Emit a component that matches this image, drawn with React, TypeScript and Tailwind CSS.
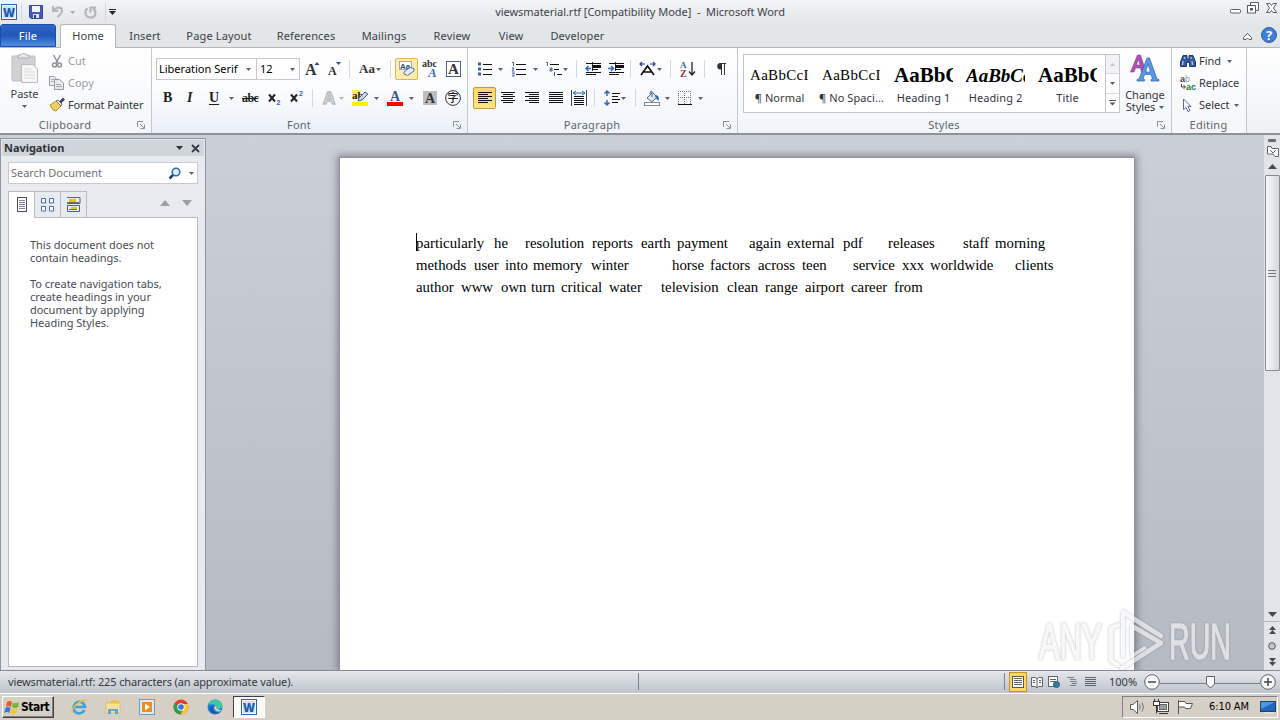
import React from 'react';
import clsx from 'clsx';

interface IconProps {
    w: number;
    h?: number;
    className?: string;
    children: React.ReactNode;
}

const Icon = ({ w, h = 16, className, children }: IconProps) => (
    <svg width={w} height={h} viewBox={`0 0 ${w} ${h}`} fill="none" className={clsx('shrink-0 overflow-visible', className)}>
        {children}
    </svg>
);

const Caret = ({ className, color = '#5c6066' }: { className?: string; color?: string }) => (
    <Icon w={5} h={3} className={className}>
        <path d="M0 0H5L2.5 3Z" fill={color} />
    </Icon>
);

const Sep = ({ className }: { className?: string }) => <div className={clsx('h-[18px] w-px shrink-0 bg-[#d5d9de]', className)} />;

const Launcher = () => (
    <Icon w={8} h={8}>
        <path d="M.5 6V.5H6M3 3L7 7M7.500 3.500V7.500H3.500" stroke="#8b919a" />
    </Icon>
);

interface GroupProps {
    label: string;
    className: string;
    launcher?: boolean;
    children: React.ReactNode;
}

const Group = ({ label, className, launcher = true, children }: GroupProps) => (
    <div className={clsx('flex h-full shrink-0 flex-col border-r border-[#c3c8ce]', className)}>
        <div className="h-[69px] shrink-0">{children}</div>
        <div className={clsx('flex h-[16px] items-center text-[#5f656d]', launcher ? 'pr-[6px]' : 'pr-[1px]')}>
            <span className={clsx('flex-1 text-center tracking-[0.25px]', launcher && 'pr-[7px]')}>{label}</span>
            {launcher && <Launcher />}
        </div>
    </div>
);

const Lines = ({ rows }: { rows: number[][] }) => (
    <>
        {rows.map(([x, y, len]) => (
            <path key={y} d={`M${x} ${y}.5h${len}`} stroke="#111" />
        ))}
    </>
);

const WordLogo = ({ className }: { className?: string }) => (
    <Icon w={16} className={className}>
        <rect x=".5" y=".5" width="15" height="15" fill="#f4f9fe" stroke="#2b66b0" />
        <rect x="2" y="2" width="12" height="12" fill="#cfe2f5" />
        <text x="8" y="12.500" textAnchor="middle" fontSize="12" fontWeight="800" fontFamily="Open Sans" fill="#1c5bac" textLength="12" lengthAdjust="spacingAndGlyphs">W</text>
    </Icon>
);

const tabs = [
    { name: 'Insert', cls: 'w-[58px]' },
    { name: 'Page Layout', cls: 'w-[90px]' },
    { name: 'References', cls: 'w-[84px]' },
    { name: 'Mailings', cls: 'w-[72px]' },
    { name: 'Review', cls: 'w-[64px]' },
    { name: 'View', cls: 'w-[54px]' },
    { name: 'Developer', cls: 'w-[79px]' },
];

const TitleBar = () => (
    <div className="flex h-6 shrink-0 items-center bg-gradient-to-b from-[#f2f4f6] to-[#e3e7ea]">
        <WordLogo className="ml-[1px]" />
        <Sep className="ml-[4px] h-[13px] bg-[#a9aeb5]" />
        <Icon w={14} h={14} className="ml-[7px]">
            <path d="M.5.5H13.500V13.500H2L.5 12Z" fill="#4956bd" stroke="#3a449c" />
            <path d="M3 1H11V7H3Z" fill="#f4f6ff" />
            <path d="M4 9H10V13H4Z" fill="#dfe3f3" />
            <path d="M5 10H7V13H5Z" fill="#303a8c" />
        </Icon>
        <Icon w={14} h={14} className="ml-[8px]">
            <path d="M2 1V6H7.500M3 5.500C5 2 10.500 1.500 11 5C11.500 8 9 10 6.500 12" stroke="#b3b6ba" strokeWidth="2.200" />
        </Icon>
        <Caret className="ml-[5px]" color="#a4a8ad" />
        <Icon w={13} h={13} className="ml-[9px]">
            <path d="M3.500 2.500C0 5 1 11.500 6.500 11.500S13 5 9 2.500M6.500 6.500V1.500H12" stroke="#b3b6ba" strokeWidth="2.200" />
        </Icon>
        <Sep className="ml-[8px] h-[13px] bg-[#8e949b]" />
        <Icon w={7} h={6} className="ml-[3px]">
            <path d="M0 .5H7" stroke="#222" />
            <path d="M0 2H7L3.500 6Z" fill="#222" />
        </Icon>
        <div className="flex-1 pr-[66px] text-center tracking-[-0.04px] text-[#3d4147]">viewsmaterial.rtf [Compatibility Mode]&nbsp; -&nbsp; Microsoft Word</div>
        <Icon w={48} h={13} className="mr-[2px] mb-[7px]">
            <rect x=".5" y="7.500" width="10" height="3.500" rx="1" fill="#fff" stroke="#5a5e64" />
            <path d="M20.500 3.500V.5H28.500V8.500H25" fill="#fff" stroke="#5a5e64" />
            <rect x="17.500" y="3.500" width="8" height="7.500" fill="#fff" stroke="#5a5e64" />
            <rect x="20.500" y="6.500" width="2" height="1.500" stroke="#5a5e64" />
            <path d="M36.500 1.500H40L41.500 3.500L43 1.500H46.500L43.500 6L46.500 10.500H43L41.500 8.500L40 10.500H36.500L39.500 6Z" fill="#fff" stroke="#5a5e64" />
        </Icon>
    </div>
);

const TabBar = () => (
    <div className="flex h-6 shrink-0 items-end border-b border-[#b3b8be] bg-[#e2e6e9] text-[#3c4046]">
        <div className="flex h-[23px] w-[56px] items-center justify-center rounded-t-[3px] border border-[#1e4fa8] bg-gradient-to-b from-[#2f66c6] via-[#2257b8] to-[#4f8de0] tracking-[0.2px] text-white">File</div>
        <div className="ml-[4px] -mb-px flex h-[24px] w-[56px] items-center justify-center rounded-t-[3px] border border-b-0 border-[#b3b8be] bg-white pb-[2px] tracking-[0.1px]">Home</div>
        <div className="flex h-[23px] flex-1 items-center tracking-[0.15px]">
            {tabs.map((tab) => (
                <div key={tab.name} className={clsx('shrink-0 text-center', tab.cls)}>{tab.name}</div>
            ))}
        </div>
        <Icon w={11} h={9} className="mb-[6px]">
            <path d="M1.500 5.500L5.500 1.500L9.500 5.500V7.500H7L5.500 6L4 7.500H1.500Z" fill="#fff" stroke="#5a5e64" />
        </Icon>
        <Icon w={16} className="mr-[3px] mb-[4px] ml-[8px]">
            <circle cx="8" cy="8" r="7.500" fill="#3f7fd6" stroke="#2d5ea8" />
            <text x="8" y="12.500" textAnchor="middle" fontSize="13" fontWeight="700" fontFamily="Open Sans" fill="#fff">?</text>
        </Icon>
    </div>
);

const Clipboard = () => (
    <Group label="Clipboard" className="w-[152px] bg-gradient-to-b from-white to-[#f4f6f9]">
        <div className="flex h-full">
            <div className="flex w-[49px] flex-col items-center pt-[5px] text-[#3c4046]">
                <Icon w={28} h={31}>
                    <rect x="1" y="3" width="23" height="25" rx="1" fill="#d0d1d3" stroke="#bbbdc0" />
                    <path d="M7 5V2H10C10 0 15 0 15 2H18V5Z" fill="#e8e8e8" stroke="#a9abae" />
                    <path d="M10.500 11.500H22L26.500 16V29.500H10.500Z" fill="#f6f6f7" stroke="#b9bbbe" />
                    <path d="M13 16H20M13 19H24M13 22H24M13 25H24" stroke="#d9dadc" />
                </Icon>
                <span className="mt-[2px] leading-[15px] tracking-[-0.1px]">Paste</span>
                <Caret className="mt-[4px]" />
            </div>
            <div className="flex flex-col pt-[2px] text-[#9a9da1]">
                <div className="flex h-[22px] items-center">
                    <Icon w={16} className="mr-[3px]">
                        <path d="M4.500 2L9 10M11.500 2L7 10" stroke="#8e9296" strokeWidth="1.500" />
                        <circle cx="5.500" cy="12" r="2" stroke="#8e9296" strokeWidth="1.500" />
                        <circle cx="10.500" cy="12" r="2" stroke="#8e9296" strokeWidth="1.500" />
                    </Icon>
                    Cut
                </div>
                <div className="flex h-[22px] items-center">
                    <Icon w={16} className="mr-[3px]">
                        <path d="M.5 1.500H5L7.500 4V10.500H.5Z" fill="#f0f0f1" stroke="#96999d" />
                        <path d="M5.500 4.500H10.500L14.500 8V14.500H5.500Z" fill="#e9eaeb" stroke="#96999d" />
                        <path d="M2 4.500H5M2 6.500H5M7 9.500H12M7 11.500H13" stroke="#a8aaad" />
                    </Icon>
                    Copy
                </div>
                <div className="flex h-[22px] items-center tracking-[-0.15px] text-[#33373c]">
                    <Icon w={16} className="mr-[3px]">
                        <path d="M1 8L7 4L12 9L7 14L4 13Z" fill="#f1cf62" stroke="#b98f2e" />
                        <path d="M7 4L9 3L13 7L12 9Z" fill="#f7f0cf" stroke="#77736a" />
                        <path d="M10.500 4.500L14 1L15.500 2.500L12 6Z" fill="#49408e" stroke="#49408e" />
                    </Icon>
                    Format Painter
                </div>
            </div>
        </div>
    </Group>
);

const FontGroup = () => (
    <Group label="Font" className="w-[316px] bg-gradient-to-b from-white via-[#fbfcfe] to-[#eaf0f8]">
        <div className="mt-[10px] flex h-[22px] items-center pl-[4px]">
            <div className="flex h-[22px] w-[101px] items-center justify-between border border-[#c5c9cf] bg-white pr-[5px] pl-[2px] text-black">
                Liberation Serif <Caret />
            </div>
            <div className="flex h-[22px] w-[43px] items-center justify-between border border-l-0 border-[#c5c9cf] bg-white pr-[4px] pl-[3px] text-black">
                12 <Caret />
            </div>
            <Icon w={15} className="ml-[5px]">
                <text x="0" y="14" fontSize="16" fontWeight="700" fontFamily="Liberation Serif" fill="#333">A</text>
                <path d="M9.500 4L12 1L14.500 4Z" fill="#2f4a85" />
            </Icon>
            <Icon w={13} className="ml-[8px]">
                <text x="0" y="14" fontSize="12" fontWeight="700" fontFamily="Liberation Serif" fill="#333">A</text>
                <path d="M8 1H13L10.500 4Z" fill="#2f4a85" />
            </Icon>
            <Sep className="ml-[8px]" />
            <span className="ml-[9px] w-[16px] font-['Liberation_Serif'] text-[13px] font-bold text-[#333]">Aa</span>
            <Caret className="ml-[1px]" />
            <Sep className="ml-[9px]" />
            <div className="ml-[4px] flex h-[22px] w-[23px] shrink-0 items-center justify-center rounded-[2px] border border-[#e0b44c] bg-[#fdeeb0]">
                <Icon w={17}>
                    <rect x="1.500" y=".5" width="12" height="8" fill="#fff" stroke="#9ba9c4" />
                    <text x="2" y="7.500" fontSize="8" fontWeight="700" fontFamily="Liberation Sans" fill="#34527f">Aa</text>
                    <path d="M6 11L12 6.500L16 7.500V10L9.500 14.500L6 13Z" fill="#e8eef9" stroke="#5571a8" />
                </Icon>
            </div>
            <Icon w={16} h={18} className="ml-[4px]">
                <text x="0" y="7" fontSize="10" fontWeight="700" fontFamily="Liberation Serif" fill="#333" textLength="15">abc</text>
                <text x="6" y="17" fontSize="13" fontWeight="700" fontStyle="italic" fontFamily="Liberation Serif" fill="#3c69b8">A</text>
            </Icon>
            <Icon w={16} className="ml-[8px]">
                <rect x=".5" y=".5" width="14" height="15" fill="#fff" stroke="#4f6285" />
                <text x="7.500" y="13" textAnchor="middle" fontSize="15" fontWeight="700" fontFamily="Liberation Serif" fill="#333">A</text>
            </Icon>
        </div>
        <div className="mt-[8px] flex h-[20px] items-center pl-[4px] font-['Liberation_Serif'] text-[14px] font-bold text-[#1d1d1d]">
            <span className="ml-[7px] w-[10px]">B</span>
            <span className="ml-[14px] w-[9px] font-bold italic">I</span>
            <span className="ml-[13px] w-[11px] underline underline-offset-2">U</span>
            <Caret className="ml-[9px]" />
            <span className="ml-[8px] w-[17px] text-[12px] tracking-[-0.6px] line-through">abc</span>
            <Icon w={13} className="ml-[9px]">
                <path d="M1 4.500L7 11.500M7 4.500L1 11.500" stroke="#222" strokeWidth="2" />
                <text x="8.500" y="14.500" fontSize="7" fontWeight="700" fontFamily="Liberation Sans" fill="#3465ac">2</text>
            </Icon>
            <Icon w={14} className="ml-[9px]">
                <path d="M1 4.500L7 11.500M7 4.500L1 11.500" stroke="#222" strokeWidth="2" />
                <text x="9" y="6" fontSize="7" fontWeight="700" fontFamily="Liberation Sans" fill="#3465ac">2</text>
            </Icon>
            <Sep className="ml-[8px]" />
            <Icon w={15} className="ml-[9px]">
                <text x="1" y="14" fontSize="17" fontWeight="700" fontFamily="Liberation Sans" fill="#f6f6f6" stroke="#b9bbbf" strokeWidth="1.500">A</text>
            </Icon>
            <Caret className="ml-[2px]" color="#b5b8bc" />
            <Icon w={17} className="ml-[8px]">
                <rect x="0" y="0" width="9" height="9" fill="#ffee62" />
                <text x="0" y="8.500" fontSize="11" fontWeight="700" fontFamily="Liberation Serif" fill="#222">ab</text>
                <path d="M7 8L13 2L16 4L10 10L6 11Z" fill="#c7d4ea" stroke="#4b648f" />
                <rect y="12" width="16" height="4" fill="#fff200" />
            </Icon>
            <Caret className="ml-[5px]" />
            <Icon w={16} className="ml-[8px]">
                <text x="8" y="10.500" textAnchor="middle" fontSize="14" fontWeight="700" fontFamily="Liberation Serif" fill="#34558f">A</text>
                <rect y="12" width="16" height="4" fill="#f00" />
            </Icon>
            <Caret className="ml-[6px]" />
            <Icon w={14} className="ml-[9px]">
                <rect y="1" width="14" height="14" fill="#bdbdbd" />
                <text x="7" y="13" textAnchor="middle" fontSize="14" fontWeight="700" fontFamily="Liberation Serif" fill="#333">A</text>
            </Icon>
            <Icon w={16} className="ml-[8px]">
                <circle cx="8" cy="8" r="7.400" stroke="#333" />
                <text x="8" y="12" textAnchor="middle" fontSize="11" fontFamily="Noto Sans CJK SC" fontWeight="500" fill="#222">字</text>
            </Icon>
        </div>
    </Group>
);

const alignCenter = [[0, 1, 14], [2, 3, 10], [0, 5, 14], [2, 7, 10], [0, 9, 14], [2, 11, 10]];
const alignRight = [[0, 1, 14], [4, 3, 10], [0, 5, 14], [4, 7, 10], [0, 9, 14], [4, 11, 10]];
const alignLeft = [[0, 1, 14], [0, 3, 10], [0, 5, 14], [0, 7, 10], [0, 9, 14], [0, 11, 10]];
const alignFull = [[0, 1, 14], [0, 3, 14], [0, 5, 14], [0, 7, 14], [0, 9, 14], [0, 11, 14]];

const IndentLines = () => (
    <>
        <Lines rows={[[1, 1, 15], [7, 4, 9], [7, 7, 6], [1, 10, 15], [1, 12, 10]]} />
        <path d="M7 3.500H16M7 5.500H16" stroke="#111" />
        <path d="M7.500 0V14" stroke="#333" strokeDasharray="1 1" />
    </>
);

const Paragraph = () => (
    <Group label="Paragraph" className="w-[270px] bg-gradient-to-b from-white to-[#f1f5fa]">
        <div className="mt-[10px] flex h-[22px] items-center">
            <Icon w={14} h={14} className="ml-[10px]">
                <path d="M0 2H3M0 7H3M0 12H3" stroke="#3c62a5" strokeWidth="3" />
                <path d="M5 2.500H14M5 7.500H14M5 12.500H14" stroke="#111" />
            </Icon>
            <Caret className="ml-[6px]" />
            <Icon w={15} h={15} className="ml-[8px]">
                <path d="M1 .5H2.500V4M1 6H3L1 9H3.500M1 11H3.500L2 12.500L3.500 14H1" stroke="#3c62a5" />
                <path d="M5 2.500H15M5 7.500H15M5 12.500H15" stroke="#111" />
            </Icon>
            <Caret className="ml-[7px]" />
            <Icon w={17} className="ml-[7px]">
                <path d="M1 1.500H2.500V5M4.500 7H7V10H5V8.500H7M9.500 11V15" stroke="#3c62a5" />
                <path d="M5 3.500H14M9 8.500H14M12 13.500H17" stroke="#111" />
            </Icon>
            <Caret className="ml-[1px]" />
            <Sep className="ml-[8px]" />
            <Icon w={16} h={14} className="ml-[8px]">
                <IndentLines />
                <path d="M6 6.500H1M3.500 4L1 6.500L3.500 9" stroke="#3267c0" strokeWidth="1.500" />
            </Icon>
            <Icon w={16} h={14} className="ml-[7px]">
                <IndentLines />
                <path d="M0 6.500H5M3 4L5.500 6.500L3 9" stroke="#3267c0" strokeWidth="1.500" />
            </Icon>
            <Sep className="ml-[6px]" />
            <Icon w={17} className="ml-[8px]">
                <path d="M2 14L8.500 5L15 14M4.500 11H12.500" stroke="#111" strokeWidth="1.700" />
                <path d="M1 3H6M3 1L1 3L3 5M11 3H16M14 1L16 3L14 5" stroke="#293d94" strokeWidth="1.200" />
            </Icon>
            <Caret className="ml-[1px]" />
            <Sep className="ml-[8px]" />
            <Icon w={16} className="ml-[9px]">
                <text x="0" y="7" fontSize="9" fontWeight="700" fontFamily="Liberation Serif" fill="#3465ac">A</text>
                <text x="0" y="15.500" fontSize="10" fontWeight="700" fontFamily="Liberation Serif" fill="#9d3434">Z</text>
                <path d="M12 1V13M9 10.500L12 14L15 10.500" stroke="#222" strokeWidth="1.300" />
            </Icon>
            <Sep className="ml-[8px]" />
            <Icon w={11} h={14} className="ml-[11px]">
                <path d="M10 1.500H4.500M5.500 1V13M8.500 1V13" stroke="#333" />
                <path d="M5.500 1H4.500A3 3 0 0 0 4.500 7.500H5.500Z" fill="#333" />
            </Icon>
        </div>
        <div className="mt-[7px] flex h-[22px] items-center">
            <div className="ml-[5px] flex h-[22px] w-[23px] items-center justify-center rounded-[2px] border border-[#c9973b] bg-gradient-to-b from-[#fbd574] to-[#ffe47e]">
                <Icon w={14} h={14}><Lines rows={alignLeft} /></Icon>
            </div>
            <Icon w={14} h={14} className="ml-[5px]"><Lines rows={alignCenter} /></Icon>
            <Icon w={14} h={14} className="ml-[10px]"><Lines rows={alignRight} /></Icon>
            <Icon w={14} h={14} className="ml-[10px]"><Lines rows={alignFull} /></Icon>
            <Icon w={16} className="ml-[8px]">
                <path d="M.5 0V16M15.500 0V16" stroke="#444" />
                <path d="M2 3H14M5 1L2 3L5 5M11 1L14 3L11 5" stroke="#3465ac" />
                <path d="M3 6.500H13M3 8.500H13M3 10.500H13M3 12.500H13M3 14.500H13" stroke="#111" />
            </Icon>
            <Sep className="ml-[7px]" />
            <Icon w={16} className="ml-[9px]">
                <path d="M3 1V6M.5 3.500L3 1L5.500 3.500M3 10V15M.5 12.500L3 15L5.500 12.500" stroke="#3465ac" strokeWidth="1.500" />
                <path d="M8 3.500H16M8 6.500H14M8 9.500H16M8 12.500H14" stroke="#111" />
            </Icon>
            <Caret className="ml-[1px]" />
            <Sep className="ml-[9px]" />
            <Icon w={17} className="ml-[8px]">
                <path d="M3 8L8.500 2.500L13 7L8 12Z" fill="#dfe7f2" stroke="#51698f" />
                <path d="M8 7V1.500Q6 0 6 4" stroke="#51698f" />
                <path d="M12 5Q16 6 14.500 11Q12 9 11 6Z" fill="#3c69b8" />
                <rect x=".5" y="12.500" width="15" height="3" fill="#fff" stroke="#888" />
            </Icon>
            <Caret className="ml-[4px]" />
            <Icon w={14} h={14} className="ml-[8px]">
                <path d="M.5 0V13M6.500 0V13M12.500 0V13M0 .5H13M0 6.500H13" stroke="#777" strokeDasharray="1 1" />
                <path d="M0 13.500H14" stroke="#111" />
            </Icon>
            <Caret className="ml-[6px]" />
        </div>
    </Group>
);

const styleCards = [
    { sample: 'AaBbCcI', name: '¶ Normal', cls: 'text-[15px] tracking-[0.3px]' },
    { sample: 'AaBbCcI', name: '¶ No Spaci...', cls: 'text-[15px] tracking-[0.3px]' },
    { sample: 'AaBbC', name: 'Heading 1', cls: 'text-[21px] font-bold' },
    { sample: 'AaBbCc', name: 'Heading 2', cls: 'text-[19px] font-bold italic' },
    { sample: 'AaBbC', name: 'Title', cls: 'text-[21px] font-bold' },
];

const Styles = () => (
    <Group label="Styles" className="w-[434px] bg-gradient-to-b from-white to-[#f1f5fa]">
        <div className="flex pt-[6px] pl-[5px]">
            <div className="flex h-[59px] w-[377px] border border-[#c1c6cc] bg-white">
                {styleCards.map((card) => (
                    <div key={card.name} className="flex w-[72px] shrink-0 flex-col items-center pt-[9px] pr-px text-[#33373c]">
                        <div className={clsx("h-[23px] w-[59px] overflow-hidden font-['Liberation_Serif'] leading-[23px] whitespace-nowrap text-black", card.cls)}>{card.sample}</div>
                        <span className="mt-[3px] leading-[16px] tracking-[0.1px] whitespace-nowrap">{card.name}</span>
                    </div>
                ))}
                <div className="ml-[1px] flex flex-1 flex-col border-l border-[#c1c6cc]">
                    <div className="flex flex-1 items-center justify-center border-b border-[#d5d9de] bg-[#f1f2f4]">
                        <Icon w={5} h={3}><path d="M0 3H5L2.500 0Z" fill="#c0c3c7" /></Icon>
                    </div>
                    <div className="flex flex-1 items-center justify-center border-b border-[#d5d9de]"><Caret /></div>
                    <div className="flex flex-1 items-center justify-center">
                        <Icon w={7} h={6}>
                            <path d="M0 .5H7" stroke="#555" />
                            <path d="M.5 2.500H6.500L3.500 5.500Z" fill="#555" />
                        </Icon>
                    </div>
                </div>
            </div>
            <div className="flex w-[50px] flex-col items-center leading-[12px] text-[#33373c]">
                <Icon w={30} h={28}>
                    <path d="M.5 18L7.500 1H10.500L16 18H11.500L10.500 14H5.500L4 18ZM6.500 11H10L8.500 5Z" fill="#b14fb0" fillRule="evenodd" stroke="#8b3b95" strokeWidth=".6" />
                    <path d="M7 27V25.500L9 25L17 4H19.500L27 25L29 25.500V27H21V25.500L22.500 25L21 20.500H14.500L13 25L14.500 25.500V27ZM15.500 18H20.500L18 10Z" fill="#5a97e0" fillRule="evenodd" stroke="#2c65b2" strokeWidth=".7" />
                </Icon>
                <span className="mt-[7px]">Change</span>
                <span className="flex items-center gap-[4px] tracking-[-0.1px]">Styles <Caret /></span>
            </div>
        </div>
    </Group>
);

const Editing = () => (
    <Group label="Editing" launcher={false} className="w-[75px] bg-gradient-to-b from-white to-[#f4f6f9]">
        <div className="flex flex-col pt-[2px] pl-[8px] text-[#33373c]">
            <div className="flex h-[22px] items-center">
                <Icon w={16} className="mr-[3px]">
                    <path d="M3 2.500H7V6H9V2.500H13L15.500 9V13.500H9.500V9.500H6.500V13.500H.5V9Z" fill="#3658a0" stroke="#22386f" />
                    <path d="M3 8L2.500 12M12 8L12.500 12M4.500 4V6M11 4V6" stroke="#b4c8ee" strokeWidth="1.300" />
                </Icon>
                Find <Caret className="ml-[6px]" />
            </div>
            <div className="flex h-[22px] items-center">
                <Icon w={16} className="mr-[3px]">
                    <text x="0" y="7" fontSize="9" fontWeight="700" fontFamily="Liberation Sans" fill="#444">a</text>
                    <text x="5" y="7" fontSize="9" fontFamily="Liberation Sans" fill="#999">b</text>
                    <path d="M1.500 9V12H5M3.500 10L5.500 12L3.500 14" stroke="#445" />
                    <text x="6" y="15" fontSize="9" fontWeight="700" fontFamily="Liberation Sans" fill="#267d35">ac</text>
                </Icon>
                Replace
            </div>
            <div className="flex h-[22px] items-center">
                <Icon w={16} className="mr-[3px]">
                    <path d="M3.500 2V12.500L6 10.500L8 14.500L10 13.500L8 9.500H11Z" fill="#fff" stroke="#526a91" />
                </Icon>
                Select <Caret className="ml-[4px]" />
            </div>
        </div>
    </Group>
);

const Navigation = () => (
    <div className="mt-[3px] flex w-[206px] shrink-0 flex-col border border-b-0 border-[#8f959e] bg-[#e7eaef]">
        <div className="m-px mb-0 flex h-[16px] items-center bg-[#d0d4db] px-[2px] font-bold tracking-[-0.05px] text-[#2d3238]">
            <span className="flex-1">Navigation</span>
            <Icon w={7} h={4}><path d="M0 0H7L3.500 4Z" fill="#333" /></Icon>
            <Icon w={9} h={9} className="mr-[2px] ml-[8px]"><path d="M1 1L8 8M8 1L1 8" stroke="#333a44" strokeWidth="1.800" /></Icon>
        </div>
        <div className="mx-[7px] mt-[6px] flex h-[22px] items-center border border-[#c6cad1] bg-white pl-[2px] text-[#6f7379]">
            <span className="flex-1 tracking-[-0.05px]">Search Document</span>
            <Icon w={13} h={13}>
                <circle cx="8" cy="5" r="3.800" fill="#e6f0fb" stroke="#2e6bb8" strokeWidth="1.600" />
                <path d="M5 8L1.500 11.500" stroke="#1d3f77" strokeWidth="2.500" />
            </Icon>
            <Caret className="mr-[3px] ml-[8px]" />
        </div>
        <div className="mx-[7px] mt-[7px] flex h-[26px] shrink-0">
            <div className="z-10 -mb-px flex w-[27px] items-center justify-center border border-b-0 border-[#b7bcc4] bg-white pb-[1px]">
                <Icon w={10} h={15}>
                    <rect x=".5" y=".5" width="9" height="14" fill="#fff" stroke="#4a4f57" />
                    <path d="M2 3.500H8M2 5.500H8M2 7.500H8M2 9.500H8M2 11.500H8" stroke="#7a8595" />
                </Icon>
            </div>
            <div className="flex w-[26px] items-center justify-center border border-b-0 border-l-0 border-[#b7bcc4]">
                <Icon w={13} h={15}>
                    <path d="M.5 1.500H4.500V6H.5ZM8.500 1.500H12.500V6H8.500ZM.5 9.500H4.500V14H.5ZM8.500 9.500H12.500V14H8.500Z" fill="#fff" stroke="#4a6f9e" />
                </Icon>
            </div>
            <div className="flex w-[26px] items-center justify-center border border-b-0 border-l-0 border-[#b7bcc4]">
                <Icon w={13} h={15}>
                    <path d="M0 .5H13V6.500H0M.5 8.500H12.500V14.500H.5Z" stroke="#555d70" fill="#eceef4" />
                    <path d="M2 3.500H9M4 11.500H10" stroke="#e0c800" strokeWidth="3" />
                    <path d="M0 5.500H12M2 12.500H10" stroke="#6a6f80" />
                </Icon>
            </div>
            <div className="flex flex-1 items-center justify-end gap-[12px] pr-[6px] pb-[3px]">
                <Icon w={10} h={6}><path d="M0 6H10L5 0Z" fill="#9a9ea6" /></Icon>
                <Icon w={10} h={6}><path d="M0 0H10L5 6Z" fill="#9a9ea6" /></Icon>
            </div>
        </div>
        <div className="mx-[7px] mb-[3px] flex-1 border border-[#b7bcc4] bg-white pt-[20px] pl-[21px] leading-[13px] tracking-[-0.03px] text-[#484c52]">
            <p>This document does not<br />contain headings.</p>
            <p className="mt-[13px]">To create navigation tabs,<br />create headings in your<br />document by applying<br />Heading Styles.</p>
        </div>
    </div>
);

// each entry: word, advance to the next word
const textLines: [string, number][][] = [
    [['particularly', 78], ['he', 31], ['resolution', 67], ['reports', 49], ['earth', 36], ['payment', 72], ['again', 38], ['external', 56], ['pdf', 45], ['releases', 75], ['staff', 32], ['morning', 50]],
    [['methods', 58], ['user', 31], ['into', 28], ['memory', 58], ['winter', 81], ['horse', 38], ['factors', 48], ['across', 44], ['teen', 51], ['service', 49], ['xxx', 28], ['worldwide', 85], ['clients', 37]],
    [['author', 45], ['www', 40], ['own', 30], ['turn', 30], ['critical', 48], ['water', 52], ['television', 66], ['clean', 38], ['range', 40], ['airport', 46], ['career', 43], ['from', 30]],
];

const Page = () => (
    <div className="mt-[22px] ml-[133px] flex w-[796px] shrink-0 flex-col border border-b-0 border-[#8d9199] bg-white pt-[74px] pl-[76px] shadow-[0_0_7px_2px_rgba(70,74,84,0.5)]">
        {textLines.map((line, i) => (
            <div key={i} className="flex h-[22px] items-center font-['Liberation_Serif'] text-[14.8px] text-black">
                {i === 0 && <div className="-mt-[2px] -mr-px h-[18px] w-px bg-black" />}
                {line.map(([word, width]) => (
                    <span key={word} className="shrink-0 whitespace-nowrap" style={{ width }}>{word}</span>
                ))}
            </div>
        ))}
    </div>
);

const ScrollBar = () => (
    <div className="flex w-4 shrink-0 flex-col items-center bg-[#e1e4e9]">
        <div className="mt-[4px] h-[3px] w-[8px] rounded-[1px] bg-[#666b73]" />
        <Icon w={13} h={13} className="mt-[3px]">
            <path d="M1.500 1.500H5L6 3.500H12.500V11.500H9L7 9H1.500Z" fill="#fff" stroke="#646a73" />
            <path d="M4 5L7 8L10 5" stroke="#646a73" />
        </Icon>
        <Icon w={9} h={5} className="mt-[6px]"><path d="M0 5H9L4.500 0Z" fill="#444a53" /></Icon>
        <div className="mt-[6px] flex h-[196px] w-[15px] flex-col items-center justify-center gap-[2px] rounded-[1px] border border-[#858b95] bg-gradient-to-r from-[#f7f8fa] to-[#d3d8df]">
            <div className="h-px w-[8px] bg-[#6d737c]" />
            <div className="h-px w-[8px] bg-[#6d737c]" />
            <div className="h-px w-[8px] bg-[#6d737c]" />
        </div>
        <div className="flex-1" />
        <Icon w={9} h={5}><path d="M0 0H9L4.500 5Z" fill="#444a53" /></Icon>
        <div className="mt-[4px] flex h-[49px] w-full flex-col items-center border-t border-[#b4b9c1] pt-[4px]">
            <Icon w={7} h={8}><path d="M0 4H7L3.500 0ZM0 8H7L3.500 4Z" fill="#444a53" /></Icon>
            <Icon w={8} h={8} className="mt-[8px]"><circle cx="4" cy="4" r="3.300" fill="#c5c8cc" stroke="#555" /></Icon>
            <Icon w={7} h={8} className="mt-[8px]"><path d="M0 0H7L3.500 4ZM0 4H7L3.500 8Z" fill="#444a53" /></Icon>
        </div>
    </div>
);

const StatusBar = () => (
    <div className="flex h-[23px] shrink-0 items-center border-t border-[#858a93] bg-gradient-to-b from-[#e4e7eb] to-[#bfc4cc] pb-px text-[#33373c]">
        <span className="w-[638px] pl-[8px] tracking-[-0.13px]">viewsmaterial.rtf: 225 characters (an approximate value).</span>
        <div className="h-[17px] w-px bg-[#7b818a]" />
        <div className="flex-1" />
        <div className="h-[17px] w-px bg-[#7b818a]" />
        <div className="ml-[4px] flex h-[20px] w-[18px] items-center justify-center border border-[#c78f2c] bg-[#ffd967]">
            <Icon w={12} h={12}>
                <rect x=".5" y=".5" width="11" height="11" fill="#fff" stroke="#555" />
                <path d="M2 2.500H10M2 4.500H10M2 6.500H10M2 8.500H10" stroke="#666" />
            </Icon>
        </div>
        <Icon w={12} h={12} className="ml-[4px]">
            <path d="M.5 1.500H4.500L6 3L7.500 1.500H11.500V10.500H7.500L6 12L4.500 10.500H.5ZM6 3V11M2 4.500H4M2 6.500H4M8 4.500H10M8 6.500H10" fill="#f6f7f8" stroke="#60656d" />
        </Icon>
        <Icon w={12} h={12} className="ml-[5px]">
            <rect x=".5" y=".5" width="9" height="10" fill="#fff" stroke="#60656d" />
            <path d="M2 3.500H8M2 5.500H8" stroke="#60656d" />
            <circle cx="8.500" cy="8.500" r="3" fill="#318087" stroke="#2857a0" />
        </Icon>
        <Icon w={11} h={12} className="ml-[7px]">
            <path d="M0 1.500H7M3 3.500H9M3 5.500H10M5 7.500H10M3 9.500H9" stroke="#7a7f87" />
        </Icon>
        <Icon w={11} h={12} className="ml-[7px]">
            <path d="M0 1.500H11M0 3.500H11M0 5.500H11M0 7.500H11M0 9.500H11" stroke="#5c626a" />
        </Icon>
        <span className="ml-[13px] w-[28px]">100%</span>
        <Icon w={16} className="ml-[7px]">
            <circle cx="8" cy="8" r="7.300" fill="#f8f9fa" stroke="#5f656e" />
            <path d="M4 8H12" stroke="#444" strokeWidth="1.500" />
        </Icon>
        <Icon w={100} h={14}>
            <path d="M0 8.500H100" stroke="#7c828b" />
            <path d="M50.500 5V12" stroke="#7c828b" />
            <path d="M46.500 1.500H54.500V9L50.500 13L46.500 9Z" fill="#fafbfc" stroke="#5f656e" />
        </Icon>
        <Icon w={16} className="mr-[4px]">
            <circle cx="8" cy="8" r="7.300" fill="#f8f9fa" stroke="#5f656e" />
            <path d="M4 8H12M8 4V12" stroke="#444" strokeWidth="1.500" />
        </Icon>
    </div>
);

const TaskBar = () => (
    <div className="flex h-[27px] shrink-0 items-center border-t border-white bg-[#d5cfc6]">
        <div className="ml-[2px] flex h-[22px] w-[52px] items-center border border-t-white border-r-[#404040] border-b-[#404040] border-l-white bg-[#d5cfc6] pl-px font-['DejaVu_Sans_Condensed','DejaVu_Sans'] text-[12px] font-bold tracking-[-0.5px] text-black shadow-[inset_-1px_-1px_0_#808080]">
            <Icon w={16} className="mr-px">
                <path d="M3 3Q6 1 8 3L7 8Q4 6 2 8Z" fill="#e85b25" />
                <path d="M9 3.500Q12 5 15 3L14 8Q11 10 8 8Z" fill="#74b538" />
                <path d="M1.500 9Q4 7 6.500 9L5.500 14Q3 12 0 14Z" fill="#2f7fd8" />
                <path d="M7.500 9.500Q11 11 13.500 9L12.500 14Q9 16 6.500 14Z" fill="#f6c62d" />
            </Icon>
            Start
        </div>
        <Icon w={16} className="ml-[17px]">
            <path d="M13.500 11A5.800 5.800 0 1 1 14 8H4" stroke="#39a5e0" strokeWidth="2.600" />
            <path d="M1.500 14C-2 11 9 0 15.500 1.500" stroke="#f0c02f" strokeWidth="1.400" />
        </Icon>
        <Icon w={16} className="ml-[18px]">
            <path d="M1 3H6L7 1H14V5H1Z" fill="#e9c154" />
            <path d="M1 4H15V14H1Z" fill="#f8e197" stroke="#d1a945" strokeWidth=".5" />
            <path d="M3 15V10H13V15H10V12H6V15Z" fill="#59a9d5" />
        </Icon>
        <Icon w={16} className="ml-[18px]">
            <rect x=".5" y=".5" width="15" height="15" fill="#dceaf5" stroke="#6b9bc5" />
            <rect x="3" y="3" width="10" height="10" fill="#f28c13" />
            <path d="M6 4.500L11 8L6 11.500Z" fill="#fff" />
        </Icon>
        <Icon w={16} className="ml-[18px]">
            <circle cx="8" cy="8" r="7.500" fill="#e33b2e" />
            <path d="M8 8L1.500 4.200A7.500 7.500 0 0 0 7.500 15.500L11.500 9Z" fill="#2da04c" />
            <path d="M8 5H14.900A7.500 7.500 0 0 1 7.500 15.500L11 9Z" fill="#f9c930" />
            <circle cx="8" cy="8" r="3.700" fill="#fff" />
            <circle cx="8" cy="8" r="2.800" fill="#3476e0" />
        </Icon>
        <Icon w={16} className="ml-[18px]">
            <circle cx="8" cy="8" r="7.500" fill="#1f80d0" />
            <path d="M1 6C3 -1 14 -1 15.500 7C15 10 11 10.500 9.500 9.500C11 6 5 4 1 6Z" fill="#42c6a4" />
            <path d="M7 6.500C4 10 8 15 13 13.500C8 17 1 13 3 8Z" fill="#145aa8" />
            <path d="M9.500 9.500Q10 7 8 7Q6 9 9 12Q12 13 14.500 11.500Q12 11 9.500 9.500" fill="#d5cfc6" />
        </Icon>
        <div className="ml-[10px] flex h-[22px] w-[32px] items-center justify-center border border-t-[#404040] border-r-white border-b-white border-l-[#404040] bg-[#fbfaf8]">
            <WordLogo />
        </div>
        <div className="flex-1" />
        <div className="mr-[2px] flex h-[22px] w-[156px] items-center border border-t-[#808080] border-r-white border-b-white border-l-[#808080]">
            <Icon w={17} className="ml-[6px]">
                <path d="M1.500 5.500H4L8.500 1.500V14.500L4 10.500H1.500Z" fill="#fff" stroke="#555" />
                <path d="M10.500 5.500Q12 8 10.500 10.500M13 3.500Q16 8 13 12.500" stroke="#777" />
            </Icon>
            <Icon w={16} className="ml-[7px]">
                <rect x="4.500" y="3.500" width="11" height="9" fill="#fff" stroke="#444" />
                <rect x="6.500" y="5.500" width="7" height="5" fill="#9b9ea0" stroke="#666" />
                <path d="M1.500 0V3.500M5.500 0V3.500M3.500 7V14.500M6 14.500H15" stroke="#333" />
                <rect x=".5" y="2.500" width="6" height="4" fill="#fff" stroke="#333" />
            </Icon>
            <Icon w={17} className="ml-[8px]">
                <path d="M1.500 1V15" stroke="#555" />
                <path d="M2 2.500H8L9 4.500H15.500L13.500 9.500H8.500L7.500 8H2" fill="#fff" stroke="#555" />
            </Icon>
            <span className="ml-[15px] w-[42px] font-['DejaVu_Sans_Condensed','DejaVu_Sans'] text-[11px] tracking-[-0.1px] whitespace-nowrap text-black">6:10 AM</span>
            <Icon w={16} h={14} className="ml-[9px]">
                <rect x=".5" y="1.500" width="15" height="10" fill="#2165bd" stroke="#20406c" />
                <path d="M1 2H15L1 9Z" fill="#4c97e0" />
                <path d="M4 13H14" stroke="#eee" />
            </Icon>
        </div>
    </div>
);

const Watermark = () => (
    <svg
        className="pointer-events-none absolute top-[606px] left-[1034px] drop-shadow-[0_0_1px_rgba(80,85,95,0.6)]"
        width="204"
        height="68"
        viewBox="0 0 204 68"
        fill="none"
        opacity=".65"
    >
        <g fontFamily="Liberation Sans Narrow, Liberation Sans" fontSize="50" fill="#f4f5f6" stroke="#f4f5f6" strokeWidth="1.500">
            <text x="5" y="53" textLength="63" lengthAdjust="spacingAndGlyphs">ANY</text>
            <text x="135" y="53" textLength="62" lengthAdjust="spacingAndGlyphs">RUN</text>
        </g>
        <path d="M84 19L77 22V55L84 59M89 50V6L127 30M98 43V20L127 37L88 62" stroke="#f4f5f6" strokeWidth="4.500" strokeLinejoin="round" strokeLinecap="round" />
        <path d="M98 28V50L112 41" stroke="#f4f5f6" strokeWidth="3.500" strokeLinejoin="round" />
    </svg>
);

const App: React.FC = () => {
    return (
        <div className="relative flex h-[720px] w-[1280px] flex-col overflow-hidden bg-white font-['Noto_Sans',sans-serif] text-[11px] leading-[16px]">
            <TitleBar />
            <TabBar />
            {/* Ribbon */}
            <div className="flex h-[87px] shrink-0 border-b-2 border-[#8d929a] bg-gradient-to-b from-white to-[#eef1f5]">
                <Clipboard />
                <FontGroup />
                <Paragraph />
                <Styles />
                <Editing />
            </div>
            {/* Workspace */}
            <div className="flex min-h-0 flex-1 bg-gradient-to-b from-[#cbcfd8] to-[#b6bac2]">
                <Navigation />
                <div className="flex flex-1 overflow-hidden">
                    <Page />
                </div>
                <ScrollBar />
            </div>
            <StatusBar />
            <TaskBar />
            <Watermark />
        </div>
    );
};

export default App;
